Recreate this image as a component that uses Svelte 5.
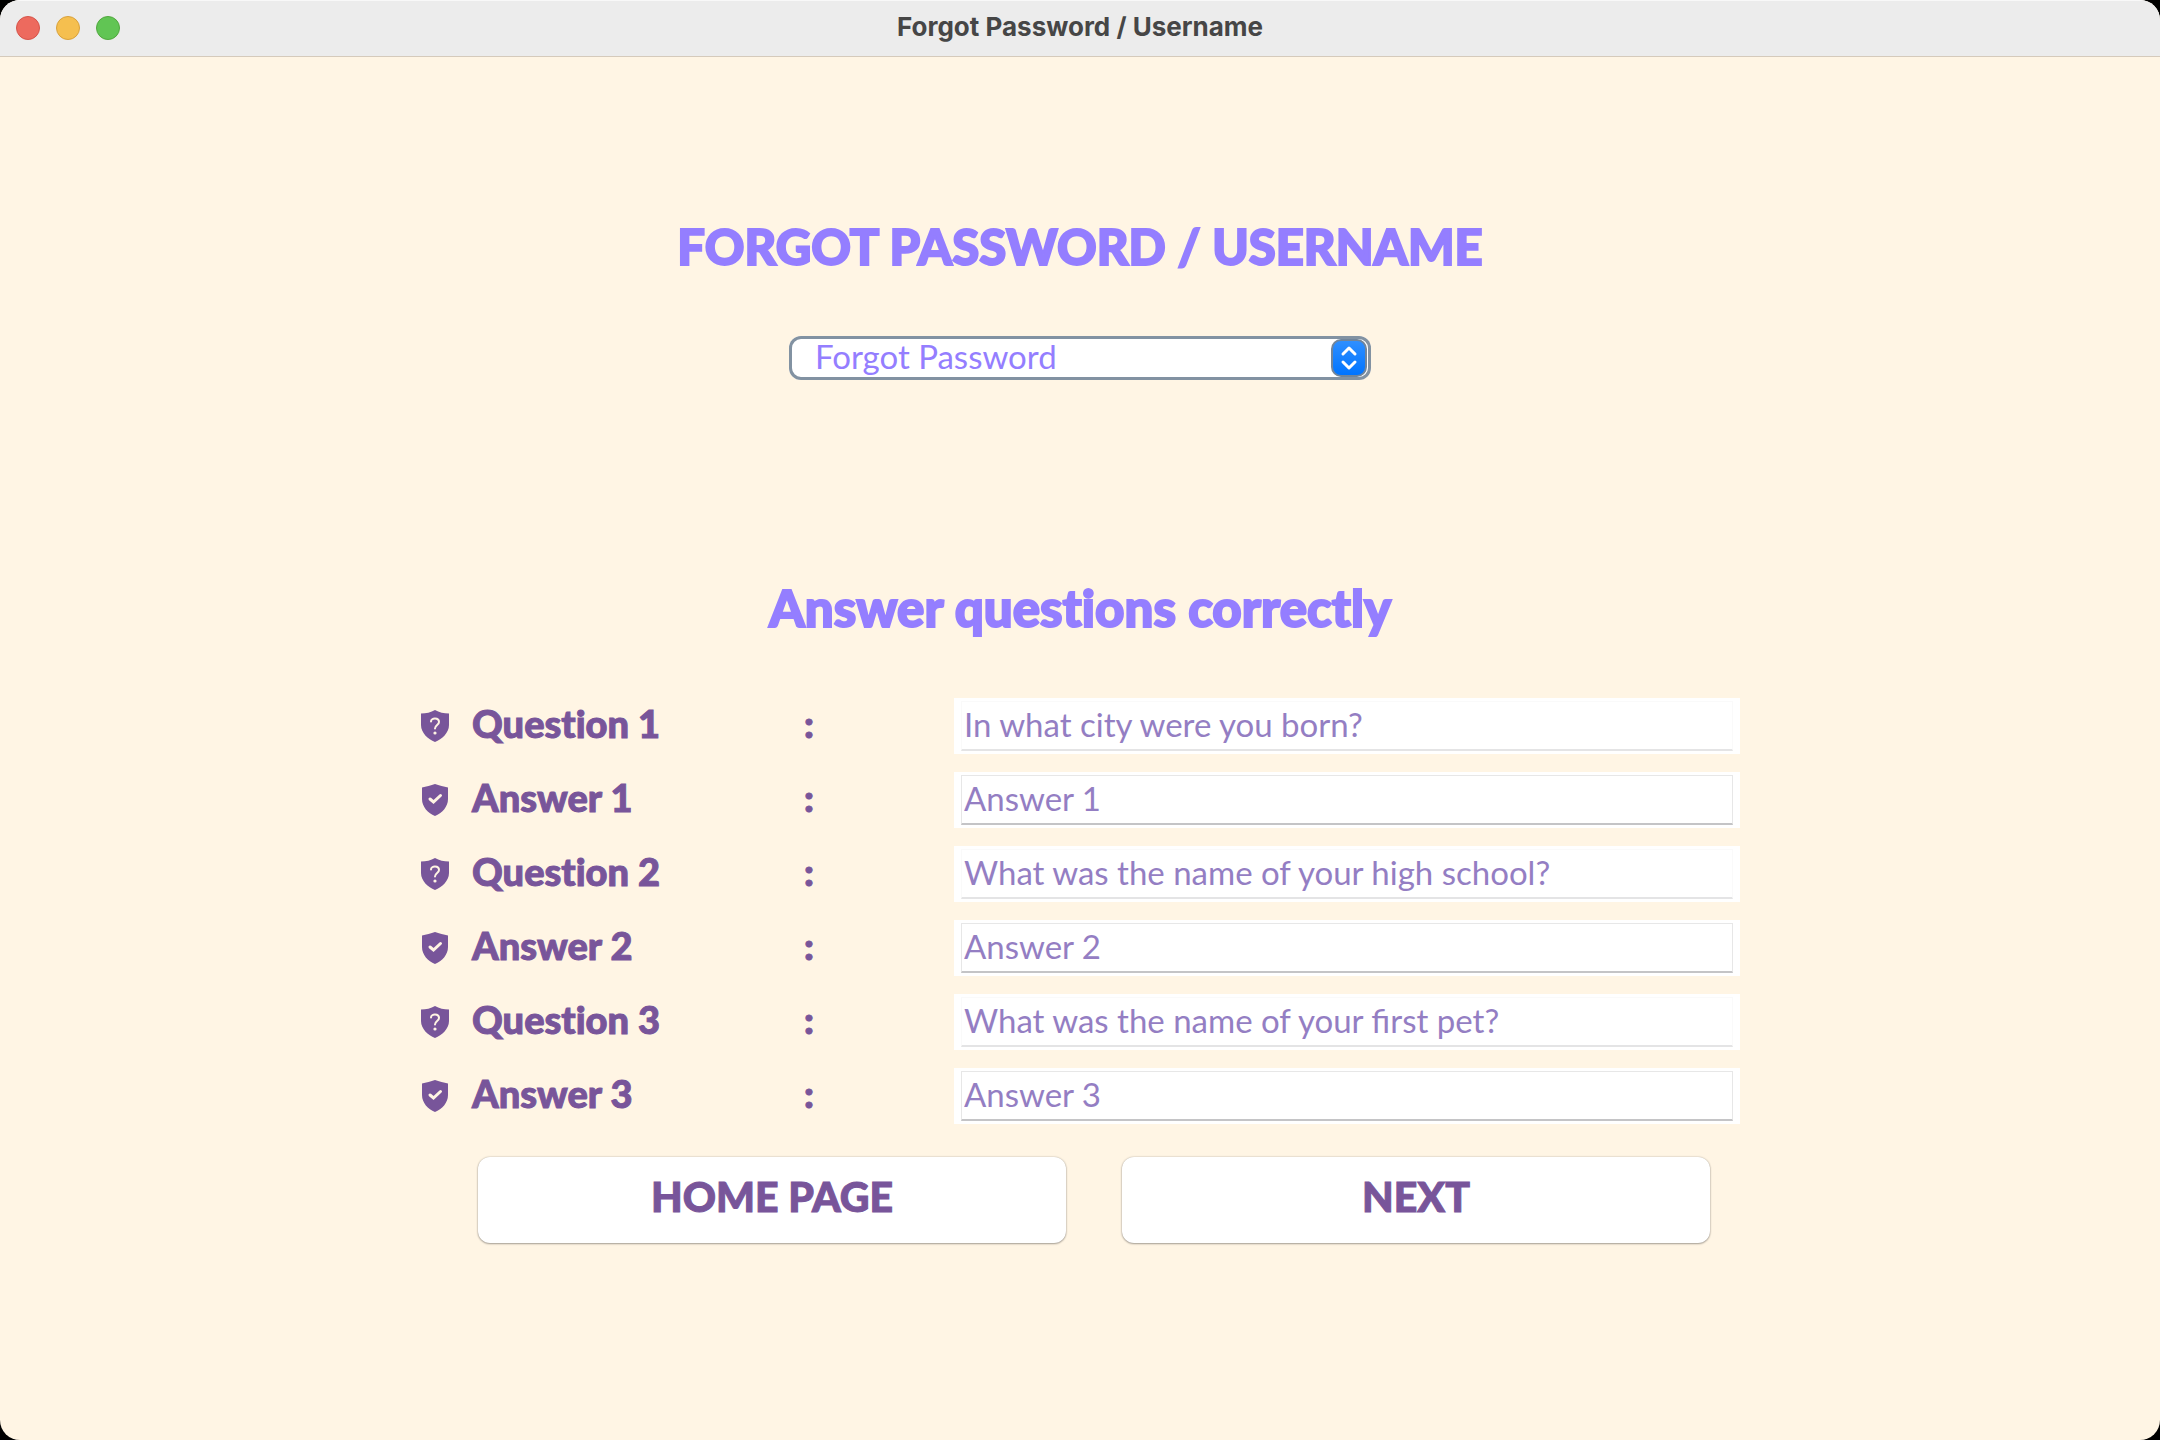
<script>
  const rows = [
    { id: 'question-1', label: 'Question 1', kind: 'question', text: 'In what city were you born?' },
    { id: 'answer-1', label: 'Answer 1', kind: 'answer', text: 'Answer 1' },
    { id: 'question-2', label: 'Question 2', kind: 'question', text: 'What was the name of your high school?' },
    { id: 'answer-2', label: 'Answer 2', kind: 'answer', text: 'Answer 2' },
    { id: 'question-3', label: 'Question 3', kind: 'question', text: 'What was the name of your first pet?' },
    { id: 'answer-3', label: 'Answer 3', kind: 'answer', text: 'Answer 3' }
  ];
</script>

<div class="window">
  <header class="titlebar">
    <div class="lights">
      <button class="light close" aria-label="Close"></button>
      <button class="light minimise" aria-label="Minimise"></button>
      <button class="light zoom" aria-label="Zoom"></button>
    </div>
    <span class="caption">Forgot Password / Username</span>
  </header>

  <main>
    <h1>FORGOT PASSWORD / USERNAME</h1>

    <div class="picker">
      <select aria-label="Recovery type">
        <option>Forgot Password</option>
        <option>Forgot Username</option>
      </select>
      <span class="stepper">
        <svg viewBox="0 0 32 34" aria-hidden="true">
          <path d="M10 13 L16 7 L22 13 M10 21 L16 27 L22 21" />
        </svg>
      </span>
    </div>

    <h2>Answer questions correctly</h2>

    <form onsubmit={(e) => e.preventDefault()}>
      {#each rows as row (row.id)}
        <div class="row">
          <svg class="shield" viewBox="0 0 30 32" aria-hidden="true">
            {#if row.kind === 'question'}
              <path class="body" d="M15 0 C11 2.500 6 3.500 1 3.500 L1 15 C1 23 8 29 15 32 C22 29 29 23 29 15 L29 3.500 C24 3.500 19 2.500 15 0 Z" />
              <path class="mark" d="M11 11.500 C11 7.500 19 7.500 19 12 C19 15 15 15 15 18.500" />
              <circle cx="15" cy="23" r="1.600" />
            {:else}
              <path class="body" d="M15 0 C11 1.500 6 2.500 2 3.500 L2 15 C2 23 8 29 15 32 C22 29 28 23 28 15 L28 3.500 C24 2.500 19 1.500 15 0 Z" />
              <path class="mark tick" d="M10 15 L13.500 18 L20.500 11.500" />
            {/if}
          </svg>
          <label for={row.id}>{row.label}</label>
          <span class="colon">:</span>
          <div class="field">
            {#if row.kind === 'question'}
              <input id={row.id} type="text" class="fixed" value={row.text} readonly />
            {:else}
              <input id={row.id} type="text" placeholder={row.text} />
            {/if}
          </div>
        </div>
      {/each}

      <div class="actions">
        <button type="button">HOME PAGE</button>
        <button type="submit">NEXT</button>
      </div>
    </form>
  </main>
</div>

<style>
  :global(body) {
    background: #000;
  }

  .window {
    box-sizing: border-box;
    min-height: 100vh;
    overflow: hidden;
    border-radius: 20px;
    background: #fff5e4;
    font-family: Lato, sans-serif;
    font-variant-ligatures: none;
    color: #78559a;
  }

  .titlebar {
    display: grid;
    grid-template-columns: 1fr auto 1fr;
    align-items: center;
    height: 56px;
    padding: 0 16px;
    border-bottom: 1px solid #d5cabb;
    background: #ececec;
    box-shadow: inset 0 1px #f8f8f8;
  }

  .lights {
    display: flex;
    gap: 16px;
  }

  .light {
    width: 24px;
    height: 24px;
    padding: 0;
    border: 1px solid;
    border-radius: 50%;
  }

  .close {
    background: #ed6a5e;
    border-color: #d5544a;
  }

  .minimise {
    background: #f5bf4f;
    border-color: #d8a13c;
  }

  .zoom {
    background: #61c554;
    border-color: #51a73e;
  }

  .caption {
    padding-bottom: 2px;
    font-family: Inter, sans-serif;
    font-size: 26px;
    font-weight: 700;
    line-height: 32px;
    color: #464646;
  }

  main {
    display: flex;
    flex-direction: column;
    align-items: center;
    padding: 159px 40px;
  }

  h1,
  h2 {
    margin: 0;
    font-size: 49px;
    font-weight: 900;
    line-height: 60px;
    color: #947eff;
    -webkit-text-stroke: 2px currentColor;
  }

  h2 {
    font-size: 51px;
  }

  .picker {
    position: relative;
    width: 582px;
    max-width: 100%;
    margin: 60px 0 198px;
  }

  select {
    display: block;
    box-sizing: border-box;
    width: 100%;
    height: 44px;
    padding: 0 48px 4px 26px;
    appearance: none;
    border: 0;
    border-radius: 12px;
    background: #fff;
    box-shadow: inset 0 0 0 3px #8292a2;
    font: 33px/40px Lato, sans-serif;
    color: #947eff;
  }

  .stepper {
    position: absolute;
    top: 3px;
    right: 4px;
    box-sizing: border-box;
    width: 36px;
    height: 38px;
    border: 2px solid #71859b;
    border-radius: 10px;
    background: linear-gradient(#2f8fff, #0074ff);
    pointer-events: none;
  }

  .stepper svg {
    display: block;
    width: 32px;
    height: 34px;
    fill: none;
    stroke: #fff;
    stroke-width: 3;
    stroke-linecap: round;
    stroke-linejoin: round;
  }

  form {
    display: flex;
    flex-direction: column;
    gap: 18px;
    width: 100%;
    max-width: 1320px;
    margin-top: 60px;
  }

  .row {
    display: grid;
    grid-template-columns: 52px 332px 150px 1fr;
    align-items: center;
    height: 56px;
  }

  .shield {
    width: 30px;
    height: 32px;
  }

  .body {
    fill: #78559a;
  }

  .mark {
    fill: none;
    stroke: #fff4e3;
    stroke-width: 2;
    stroke-linecap: round;
  }

  .tick {
    stroke-width: 3;
  }

  circle {
    fill: #fff4e3;
  }

  label,
  .colon {
    padding-bottom: 6px;
    font-size: 38px;
    font-weight: 900;
    line-height: 44px;
    -webkit-text-stroke: 1px currentColor;
  }

  .field {
    padding: 3px 7px;
    background: #fff;
  }

  input {
    display: block;
    box-sizing: border-box;
    width: 100%;
    height: 50px;
    padding: 0 2px 3px;
    border: 1px solid #e7e7e7;
    border-bottom: 2px solid #c4c4c6;
    background: #fff;
    font: 33px/40px Lato, sans-serif;
    color: #947ec3;
  }

  .fixed {
    border-color: #fafafa;
    border-bottom-color: #e4e4e5;
  }

  input::placeholder {
    color: #947ec3;
    opacity: 1;
  }

  .actions {
    display: grid;
    grid-template-columns: 1fr 1fr;
    gap: 56px;
    padding: 15px 30px 0 58px;
  }

  .actions button {
    height: 86px;
    padding: 0 0 6px;
    border: 0;
    border-radius: 12px;
    background: #fff;
    box-shadow: 0 0 2px rgb(0 0 0 / 25%), 0 1px 2px rgb(0 0 0 / 30%);
    font: 900 41px/48px Lato, sans-serif;
    color: #78559a;
    -webkit-text-stroke: 1px currentColor;
  }
</style>
